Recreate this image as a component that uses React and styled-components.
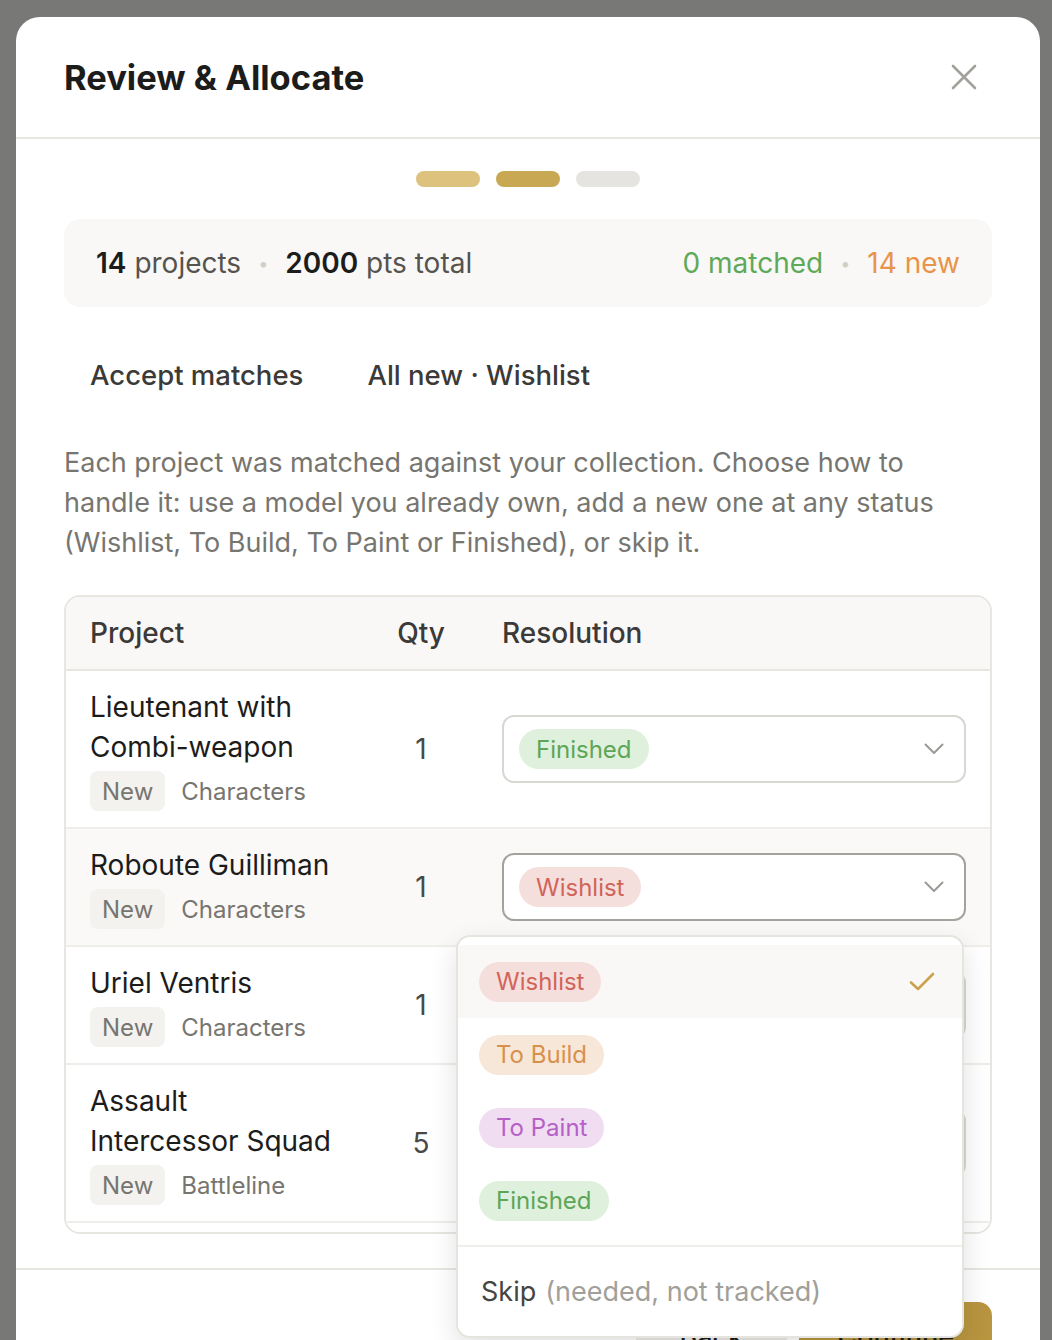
import styled, { createGlobalStyle } from 'styled-components'

const GlobalStyle = createGlobalStyle`
     * {
          box-sizing: border-box;
     }
     body {
          margin: 0;
          background: #787877;
          font-family: Inter, 'Noto Sans', 'Liberation Sans', sans-serif;
          -webkit-font-smoothing: antialiased;
     }
`

const colors = {
     dark: '#1c1c1b',
     text: '#3b3a38',
     muted: '#77756f',
     faint: '#a19f99',
     line: '#e8e6e1',
     soft: '#f9f8f6',
     gold: '#b8953f',
}

const statuses = {
     wishlist: { label: 'Wishlist', bg: '#f5dfdc', fg: '#d1645a' },
     build: { label: 'To Build', bg: '#f7e7d9', fg: '#d8914c' },
     paint: { label: 'To Paint', bg: '#f0ddf2', fg: '#b660c6' },
     finished: { label: 'Finished', bg: '#dff0dc', fg: '#5ea657' },
}

const projects = [
     { name: 'Lieutenant with Combi-weapon', qty: 1, cat: 'Characters', status: 'finished' },
     { name: 'Roboute Guilliman', qty: 1, cat: 'Characters', status: 'wishlist', open: true },
     { name: 'Uriel Ventris', qty: 1, cat: 'Characters', status: 'wishlist' },
     { name: 'Assault Intercessor Squad', qty: 5, cat: 'Battleline', status: 'wishlist' },
     { name: 'Intercessor Squad', qty: 10, cat: 'Battleline', status: 'wishlist' },
]

const Page = styled.div`
     height: 1340px;
     overflow: hidden;
     padding: 17px 12px 0 16px;
`
const Modal = styled.div`
     position: relative;
     width: 1024px;
     min-height: 1400px;
     background: #fff;
     border-radius: 24px 24px 0 0;
`
const Header = styled.div`
     height: 122px;
     display: flex;
     align-items: center;
     justify-content: space-between;
     padding: 0 62px 0 48px;
     border-bottom: 2px solid ${colors.line};
`
const Title = styled.h2`
     margin: 0;
     font-size: 34.5px;
     font-weight: 700;
     color: ${colors.dark};
`
const CloseButton = styled.button`
     background: transparent;
     border: none;
     padding: 0;
     display: flex;
     cursor: pointer;
`
const Body = styled.div`
     display: flex;
     flex-direction: column;
     gap: 32px;
     padding: 32px 48px 34px;
`
const Steps = styled.div`
     display: flex;
     justify-content: center;
     gap: 16px;
`
const Step = styled.span`
     width: 64px;
     height: 16px;
     border-radius: 8px;
     background: ${({ tone }) => tone};
`
const Stats = styled.div`
     height: 88px;
     display: flex;
     align-items: center;
     justify-content: space-between;
     padding: 0 32px;
     background: ${colors.soft};
     border-radius: 16px;
     font-size: 28px;
     color: #55534f;
`
const StatGroup = styled.div`
     display: flex;
     align-items: center;
`
const Strong = styled.b`
     font-weight: 600;
     color: ${colors.dark};
`
const Dot = styled.span`
     margin: 0 17px;
     color: #d2d0cb;
     font-size: 18px;
`
const Colored = styled.span`
     color: ${({ tone }) => tone};
`
const Actions = styled.div`
     display: flex;
     gap: 12px;
`
const GhostButton = styled.button`
     background: transparent;
     border: 2px solid transparent;
     border-radius: 12px;
     padding: 16px 24px;
     font-family: inherit;
     font-size: 27.5px;
     line-height: 36px;
     font-weight: 500;
     color: ${colors.text};
`
const Note = styled.p`
     max-width: 900px;
     margin: 0;
     font-size: 27px;
     line-height: 40px;
     color: ${colors.muted};
`
const Table = styled.div`
     height: 639px;
     border: 2px solid ${colors.line};
     border-radius: 16px;
     overflow: hidden;
`
const Row = styled.div`
     display: grid;
     grid-template-columns: 298px 114px 1fr;
     align-items: center;
     border-bottom: 2px solid #efeeea;
     background: ${({ active }) => (active ? '#faf9f7' : '#fff')};
`
const HeadRow = styled(Row)`
     height: 74px;
     background: ${colors.soft};
     border-bottom-color: ${colors.line};
     font-size: 28px;
     font-weight: 500;
     color: ${colors.text};
`
const HeadCell = styled.div`
     padding-left: ${({ center }) => (center ? '0' : '24px')};
     text-align: ${({ center }) => (center ? 'center' : 'left')};
`
const ProjectCell = styled.div`
     padding: 16px 24px;
`
const Name = styled.div`
     font-size: 28px;
     line-height: 40px;
     color: ${colors.dark};
`
const Tags = styled.div`
     display: flex;
     align-items: center;
     gap: 16px;
     margin-top: 4px;
     font-size: 24px;
     color: ${colors.muted};
`
const Badge = styled.span`
     height: 40px;
     display: inline-flex;
     align-items: center;
     padding: 0 12px;
     border-radius: 8px;
     background: #f3f2ef;
`
const Qty = styled.div`
     text-align: center;
     font-size: 28px;
     color: #4a4946;
`
const ResolutionCell = styled.div`
     padding: 0 24px;
`
const Select = styled.div`
     height: 68px;
     display: flex;
     align-items: center;
     justify-content: space-between;
     padding: 0 20px 0 15px;
     background: #fff;
     border: 2px solid ${({ open }) => (open ? '#a4a29c' : '#d9d7d2')};
     border-radius: 12px;
`
const Pill = styled.span`
     height: 40px;
     display: inline-flex;
     align-items: center;
     padding: 0 17px;
     border-radius: 20px;
     font-size: 24px;
     background: ${({ status }) => statuses[status].bg};
     color: ${({ status }) => statuses[status].fg};
`
const Menu = styled.div`
     position: absolute;
     left: 440px;
     top: 918px;
     width: 508px;
     padding: 8px 0;
     background: #fff;
     border: 2px solid #e6e4df;
     border-radius: 14px;
     box-shadow: 0 10px 28px rgba(0, 0, 0, 0.12);
     z-index: 2;
`
const MenuItem = styled.div`
     height: 73px;
     display: flex;
     align-items: center;
     justify-content: space-between;
     padding: 0 27px 0 21px;
     background: ${({ selected }) => (selected ? '#faf8f6' : '#fff')};
`
const MenuDivider = styled.div`
     height: 2px;
     margin: 8px 0;
     background: #efeeea;
`
const SkipItem = styled(MenuItem)`
     justify-content: flex-start;
     padding-left: 23px;
     font-size: 27px;
     color: #45443f;

     & span {
          margin-left: 9px;
          color: ${colors.faint};
     }
`
const Footer = styled.div`
     display: flex;
     justify-content: flex-end;
     gap: 12px;
     padding: 32px 48px;
     border-top: 2px solid ${colors.line};
`
const FooterButton = styled.button`
     height: 68px;
     padding: 0 ${({ primary }) => (primary ? '38px' : '44px')};
     border: none;
     border-radius: 14px;
     font-family: inherit;
     font-size: 27px;
     font-weight: 500;
     color: ${colors.dark};
     background: ${({ primary }) => (primary ? colors.gold : '#ecebe7')};
`

function Chevron() {
     return (
          <svg width="20" height="12" viewBox="0 0 20 12" fill="none">
               <path d="M1.5 1.5 10 10l8.5-8.5" stroke="#9c9a95" strokeWidth="2" strokeLinecap="round" strokeLinejoin="round" />
          </svg>
     )
}

function Check() {
     return (
          <svg width="26" height="20" viewBox="0 0 26 20" fill="none">
               <path d="M2 10.5 9 17 24 2" stroke="#c9a24d" strokeWidth="2.6" strokeLinecap="round" strokeLinejoin="round" />
          </svg>
     )
}

function App() {
     return (
          <Page>
               <GlobalStyle />
               <Modal>
                    <Header>
                         <Title>Review &amp; Allocate</Title>
                         <CloseButton aria-label="Close">
                              <svg width="28" height="28" viewBox="0 0 28 28" fill="none">
                                   <path d="M3 3l22 22M25 3 3 25" stroke="#a3a19c" strokeWidth="2.6" strokeLinecap="round" />
                              </svg>
                         </CloseButton>
                    </Header>
                    <Body>
                         <Steps>
                              <Step tone="#dcc27c" />
                              <Step tone="#c8a853" />
                              <Step tone="#e5e4e0" />
                         </Steps>
                         <Stats>
                              <StatGroup>
                                   <span>
                                        <Strong>14</Strong> projects
                                   </span>
                                   <Dot>•</Dot>
                                   <span>
                                        <Strong>2000</Strong> pts total
                                   </span>
                              </StatGroup>
                              <StatGroup>
                                   <Colored tone="#5fa95a">0 matched</Colored>
                                   <Dot>•</Dot>
                                   <Colored tone="#e8944a">14 new</Colored>
                              </StatGroup>
                         </Stats>
                         <Actions>
                              <GhostButton>Accept matches</GhostButton>
                              <GhostButton>All new · Wishlist</GhostButton>
                         </Actions>
                         <Note>
                              Each project was matched against your collection. Choose how to handle it: use a model you
                              already own, add a new one at any status (Wishlist, To Build, To Paint or Finished), or skip it.
                         </Note>
                         <Table>
                              <HeadRow>
                                   <HeadCell>Project</HeadCell>
                                   <HeadCell center>Qty</HeadCell>
                                   <HeadCell>Resolution</HeadCell>
                              </HeadRow>
                              {projects.map((p) => (
                                   <Row key={p.name} active={p.open}>
                                        <ProjectCell>
                                             <Name>{p.name}</Name>
                                             <Tags>
                                                  <Badge>New</Badge>
                                                  <span>{p.cat}</span>
                                             </Tags>
                                        </ProjectCell>
                                        <Qty>{p.qty}</Qty>
                                        <ResolutionCell>
                                             <Select open={p.open}>
                                                  <Pill status={p.status}>{statuses[p.status].label}</Pill>
                                                  <Chevron />
                                             </Select>
                                        </ResolutionCell>
                                   </Row>
                              ))}
                         </Table>
                    </Body>
                    <Footer>
                         <FooterButton>Back</FooterButton>
                         <FooterButton primary>Continue</FooterButton>
                    </Footer>
                    <Menu>
                         {Object.keys(statuses).map((key) => (
                              <MenuItem key={key} selected={key === 'wishlist'}>
                                   <Pill status={key}>{statuses[key].label}</Pill>
                                   {key === 'wishlist' && <Check />}
                              </MenuItem>
                         ))}
                         <MenuDivider />
                         <SkipItem>
                              Skip<span>(needed, not tracked)</span>
                         </SkipItem>
                    </Menu>
               </Modal>
          </Page>
     )
}

export default App
